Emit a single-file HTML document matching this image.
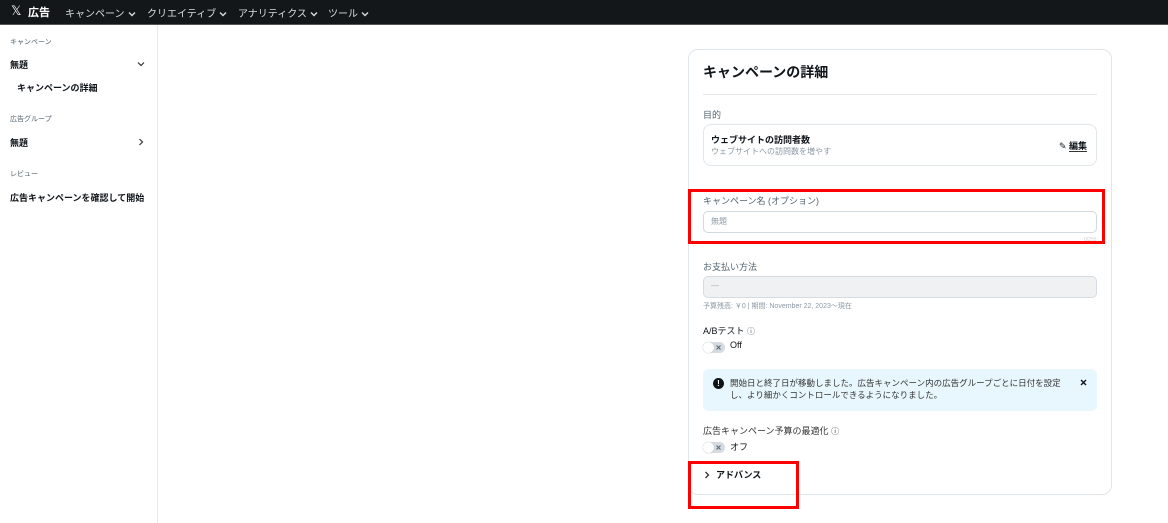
<!DOCTYPE html>
<html><head><meta charset="utf-8"><style>
*{box-sizing:border-box;margin:0;padding:0}
body{width:1168px;height:523px;overflow:hidden;background:#fff;font-family:"Liberation Sans","Noto Sans CJK JP",sans-serif;color:#0f1419;position:relative}
.a{position:absolute;white-space:nowrap}
.top{position:absolute;left:0;top:0;width:1168px;height:25px;background:#14171a;border-bottom:1px solid #555}
.nav{color:#d8dde2;font-size:10px;top:5px}
.nav svg{vertical-align:middle;margin-left:3px}
.side{position:absolute;left:0;top:25px;width:158px;height:498px;border-right:1px solid #e6e9ec}
.sm{font-size:7px;color:#536471}
.b{font-size:9px;font-weight:bold}
.card{position:absolute;left:688px;top:49px;width:424px;height:446px;border:1px solid #e1e6ea;border-radius:10px}
.lbl{font-size:9px;color:#536471}
.inp{position:absolute;left:703px;width:394px;height:22px;border:1px solid #cfd9de;border-radius:5px}
.tog{position:absolute;width:22px;height:11px;border-radius:6px;background:#d5dbe0}
.tog:before{content:"";position:absolute;left:0;top:0;width:11px;height:11px;border-radius:6px;background:#fff;box-shadow:0 0 1px #999}
.tog svg{position:absolute;left:13px;top:3px}
.red{position:absolute;border:3px solid #f00}
</style></head><body>
<div class="top"></div>
<div class="a" style="left:11px;top:3px;color:#fff;font-size:13px">𝕏</div>
<div class="a" style="left:28px;top:4px;color:#fff;font-size:11px;font-weight:bold">広告</div>
<div class="a nav" style="left:65px">キャンペーン<svg width="8" height="6" viewBox="0 0 8 6"><path d="M1 1.5L4 4.5L7 1.5" stroke="#d8dde2" stroke-width="1.4" fill="none"/></svg></div>
<div class="a nav" style="left:147px">クリエイティブ<svg width="8" height="6" viewBox="0 0 8 6"><path d="M1 1.5L4 4.5L7 1.5" stroke="#d8dde2" stroke-width="1.4" fill="none"/></svg></div>
<div class="a nav" style="left:238px">アナリティクス<svg width="8" height="6" viewBox="0 0 8 6"><path d="M1 1.5L4 4.5L7 1.5" stroke="#d8dde2" stroke-width="1.4" fill="none"/></svg></div>
<div class="a nav" style="left:328px">ツール<svg width="8" height="6" viewBox="0 0 8 6"><path d="M1 1.5L4 4.5L7 1.5" stroke="#d8dde2" stroke-width="1.4" fill="none"/></svg></div>
<div class="side"></div>
<div class="a sm" style="left:10px;top:37px">キャンペーン</div>
<div class="a b" style="left:10px;top:58px">無題</div>
<svg class="a" style="left:137px;top:61px" width="8" height="6" viewBox="0 0 8 6"><path d="M1 1.5L4 4.5L7 1.5" stroke="#333" stroke-width="1.2" fill="none"/></svg>
<div class="a b" style="left:17px;top:81px">キャンペーンの詳細</div>
<div class="a sm" style="left:10px;top:114px">広告グループ</div>
<div class="a b" style="left:10px;top:136px">無題</div>
<svg class="a" style="left:138px;top:138px" width="6" height="8" viewBox="0 0 6 8"><path d="M1.5 1L4.5 4L1.5 7" stroke="#333" stroke-width="1.2" fill="none"/></svg>
<div class="a sm" style="left:10px;top:169px">レビュー</div>
<div class="a b" style="left:10px;top:191px">広告キャンペーンを確認して開始</div>

<div class="card"></div>
<div class="a" style="left:703px;top:62px;font-size:14px;font-weight:bold">キャンペーンの詳細</div>
<div class="a" style="left:703px;top:94px;width:394px;height:1px;background:#e6e9ec"></div>
<div class="a lbl" style="left:703px;top:108px">目的</div>
<div class="a" style="left:703px;top:124px;width:394px;height:42px;border:1px solid #e1e6ea;border-radius:8px"></div>
<div class="a" style="left:711px;top:133px;font-size:9px;font-weight:bold">ウェブサイトの訪問者数</div>
<div class="a" style="left:711px;top:146px;font-size:8px;color:#8b98a5">ウェブサイトへの訪問数を増やす</div>
<div class="a" style="left:1059px;top:139px;font-size:9px">✎ <span style="font-weight:bold;border-bottom:1px solid #333">編集</span></div>
<div class="a lbl" style="left:703px;top:194px">キャンペーン名 (オプション)</div>
<div class="inp" style="top:211px"></div>
<div class="a" style="left:711px;top:216px;font-size:8px;color:#8b98a5">無題</div>
<div class="a" style="left:1084px;top:237px;font-size:5px;color:#ccc">0/255</div>
<div class="a lbl" style="left:703px;top:260px">お支払い方法</div>
<div class="inp" style="top:276px;background:#eff1f2;border-color:#d5dbe0"></div>
<div class="a" style="left:711px;top:281px;font-size:8px;color:#aaa">—</div>
<div class="a" style="left:703px;top:301px;font-size:7px;color:#8b98a5">予算残高: ￥0 | 期間: November 22, 2023〜現在</div>
<div class="a" style="left:703px;top:324px;font-size:9px">A/Bテスト <span style="font-size:8px;color:#536471">ⓘ</span></div>
<div class="tog" style="left:703px;top:342px"><svg width="5" height="5" viewBox="0 0 5 5"><path d="M0.5 0.5L4.5 4.5M4.5 0.5L0.5 4.5" stroke="#536471" stroke-width="1"/></svg></div>
<div class="a" style="left:730px;top:340px;font-size:9px">Off</div>
<div class="a" style="left:703px;top:369px;width:394px;height:42px;background:#e8f6fd;border-radius:6px"></div>
<div class="a" style="left:713px;top:378px;width:11px;height:11px;border-radius:6px;background:#0f1419;color:#fff;font-size:8px;font-weight:bold;text-align:center;line-height:11px">!</div>
<div class="a" style="left:730px;top:377px;font-size:8.5px;color:#333;line-height:12px">開始日と終了日が移動しました。広告キャンペーン内の広告グループごとに日付を設定<br>し、より細かくコントロールできるようになりました。</div>
<svg class="a" style="left:1080px;top:379px" width="7" height="7" viewBox="0 0 7 7"><path d="M1 1L6 6M6 1L1 6" stroke="#0f1419" stroke-width="1.4"/></svg>
<div class="a lbl" style="left:703px;top:424px;color:#333">広告キャンペーン予算の最適化 <span style="font-size:8px">ⓘ</span></div>
<div class="tog" style="left:703px;top:442px"><svg width="5" height="5" viewBox="0 0 5 5"><path d="M0.5 0.5L4.5 4.5M4.5 0.5L0.5 4.5" stroke="#536471" stroke-width="1"/></svg></div>
<div class="a" style="left:730px;top:440px;font-size:9px">オフ</div>
<svg class="a" style="left:704px;top:471px" width="6" height="8" viewBox="0 0 6 8"><path d="M1.5 1L4.5 4L1.5 7" stroke="#333" stroke-width="1.3" fill="none"/></svg>
<div class="a" style="left:716px;top:468px;font-size:9px;font-weight:bold">アドバンス</div>

<div class="red" style="left:688px;top:189px;width:417px;height:55px"></div>
<div class="red" style="left:688px;top:461px;width:111px;height:48px"></div>
</body></html>
